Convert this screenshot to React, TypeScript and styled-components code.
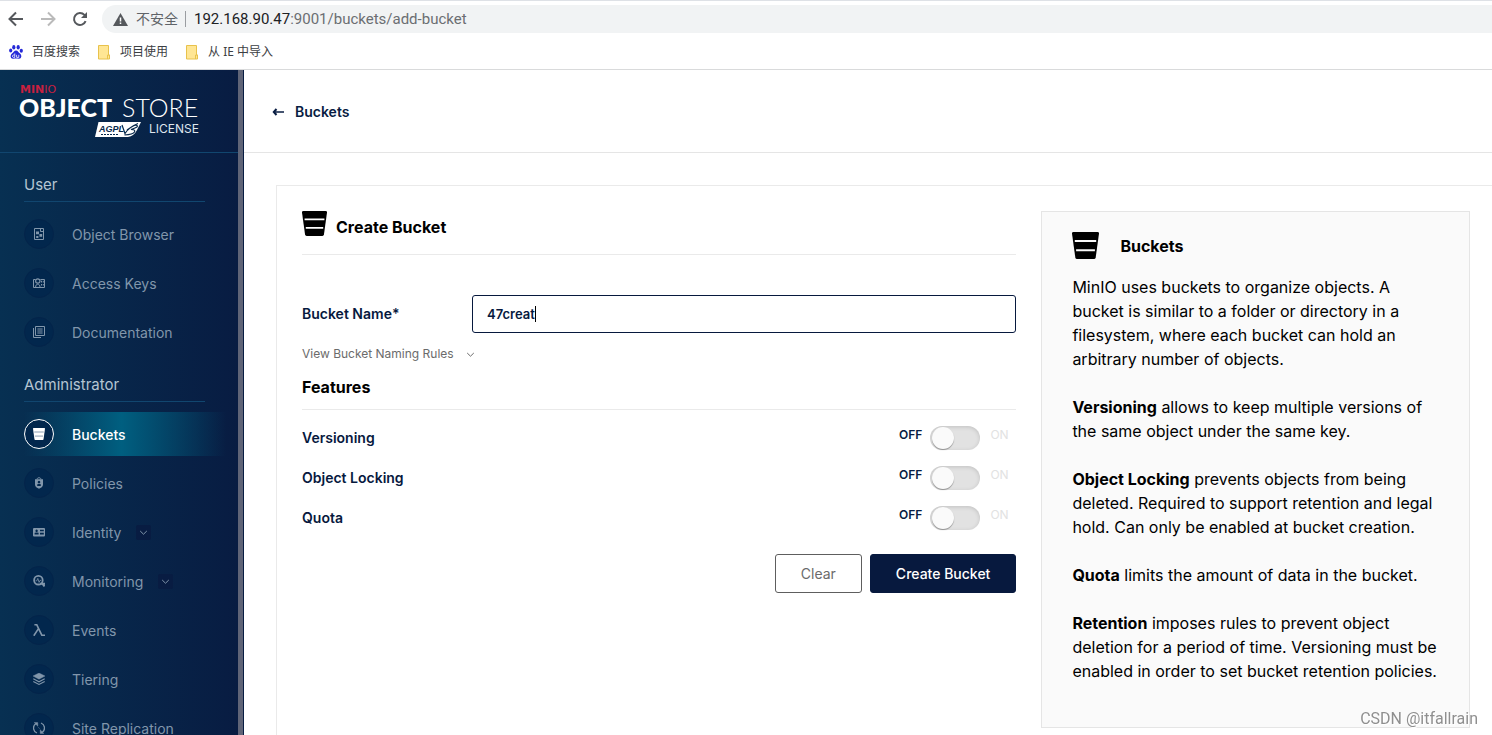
import React, { useState } from "react";
import styled, { createGlobalStyle } from "styled-components";

const navy = "#07193e";
const ui = `Inter, "Liberation Sans", sans-serif`;
const chromeFont = `"Noto Sans", "Noto Sans CJK SC", sans-serif`;

const GlobalStyle = createGlobalStyle`
  *, *::before, *::after { box-sizing: border-box; }
  body { margin: 0; background: #fff; font-family: ${ui}; color: #000; }
  button, input { font-family: inherit; }
`;

const Page = styled.div`
  display: flex;
  flex-direction: column;
  height: 100vh;
  overflow: hidden;
`;

/* ---------- browser bars ---------- */

const BrowserBar = styled.header`
  flex: none;
  border-top: 1px solid #dee1e6;
  border-bottom: 1px solid #d9dadb;
  font-family: ${chromeFont};
`;

const Toolbar = styled.div`
  display: flex;
  align-items: center;
  height: 36px;
  padding-left: 5px;
`;

const ToolButton = styled.button<{ $dim?: boolean }>`
  display: grid;
  place-items: center;
  width: 32px;
  height: 32px;
  padding: 0 10px 0 0;
  border: 0;
  background: none;
  color: ${(p) => (p.$dim ? "#bababa" : "#55585c")};
`;

const AddressBar = styled.div`
  display: flex;
  flex: 1;
  align-items: center;
  gap: 8px;
  height: 28px;
  margin-left: 1px;
  padding-left: 11px;
  border-radius: 14px 0 0 14px;
  background: #f1f3f4;
  color: #5f6368;
  font-size: 14px;
  line-height: 20px;
`;

const Insecure = styled.span`
  padding-right: 7px;
  border-right: 1px solid #9a9da1;
  line-height: 16px;
`;

const Address = styled.span`
  color: #6b6e72;
  font-size: 15px;
  font-family: Roboto, sans-serif;
  b { color: #202124; font-weight: 400; }
`;

const Bookmarks = styled.nav`
  display: flex;
  align-items: center;
  gap: 18px;
  height: 32px;
  padding: 0 0 2px 9px;
`;

const Bookmark = styled.a`
  display: flex;
  align-items: center;
  gap: 9px;
  color: #3c4043;
  font-size: 12px;
  line-height: 16px;
  text-decoration: none;
`;

/* ---------- side menu ---------- */

const Body = styled.div`
  display: flex;
  flex: 1;
  min-height: 0;
`;

const Sidebar = styled.aside`
  flex: none;
  width: 238px;
  overflow: hidden;
  background: linear-gradient(90deg, #073052 0%, #081c42 100%);
`;

const ScrollTrack = styled.div`
  flex: none;
  width: 6px;
  border-right: 1px solid #081c42;
  background: #5f6477;
`;

const Brand = styled.div`
  height: 83px;
  padding: 12px 0 0 18px;
  border-bottom: 1px solid #11466f;
  svg { display: block; }
`;

const Menu = styled.nav`
  padding-top: 1px;
`;

const MenuTitle = styled.h2`
  height: 48px;
  margin: 0 33px 0 24px;
  padding-top: 21px;
  border-bottom: 1px solid #11466f;
  color: #b4c5d3;
  font-size: 15px;
  font-weight: 400;
  line-height: 20px;
`;

const MenuList = styled.ul`
  display: grid;
  gap: 5px;
  margin: 0;
  padding: 10px 0 0;
  list-style: none;
`;

const MenuLink = styled.a<{ $active?: boolean }>`
  display: flex;
  align-items: center;
  height: 44px;
  padding-left: 24px;
  color: ${(p) => (p.$active ? "#fff" : "#8196ab")};
  background: ${(p) =>
    p.$active
      ? "linear-gradient(90deg, transparent 10%, #005f80 51%, transparent 95%)"
      : "none"};
  font-size: 14px;
  font-weight: ${(p) => (p.$active ? 500 : 400)};
  line-height: 20px;
  text-decoration: none;
`;

const MenuLabel = styled.span`
  padding-top: 2px;
`;

const MenuIcon = styled.span<{ $active?: boolean }>`
  display: grid;
  place-items: center;
  width: 30px;
  height: 30px;
  margin-right: 18px;
  border: 1px solid ${(p) => (p.$active ? "#fff" : "#04244a")};
  border-radius: 50%;
  background: #02274d;
`;

const Expand = styled.span`
  display: grid;
  place-items: center;
  width: 15px;
  height: 15px;
  margin-left: 15px;
  border-radius: 2px;
  background: #081c42;
`;

/* ---------- content ---------- */

const Main = styled.main`
  flex: 1;
  min-width: 0;
  overflow: hidden;
`;

const PageHeader = styled.div`
  display: flex;
  align-items: center;
  height: 83px;
  padding: 2px 0 0 28px;
  border-bottom: 1px solid #e5e5e5;
`;

const BackLink = styled.a`
  display: flex;
  align-items: center;
  gap: 10px;
  color: #081c42;
  font-size: 14px;
  font-weight: 600;
  line-height: 20px;
  text-decoration: none;
`;

const Panel = styled.section`
  display: grid;
  grid-template-columns: minmax(0, 5fr) minmax(0, 3fr);
  align-items: start;
  gap: 25px;
  min-height: 100%;
  margin: 32px 0 0 32px;
  padding: 25px 22px 25px 25px;
  border: solid #eaeaea;
  border-width: 1px 0 0 1px;
`;

const Form = styled.form`
  display: flex;
  flex-direction: column;
`;

const FormTitle = styled.h1`
  display: flex;
  gap: 9px;
  height: 44px;
  margin: 0 0 40px;
  border-bottom: 1px solid #eaeaea;
  font-size: 16px;
  font-weight: 700;
  line-height: 32px;
`;

const Field = styled.div`
  display: grid;
  grid-template-columns: 170px 1fr;
  align-items: center;
`;

const FieldLabel = styled.label`
  color: ${navy};
  font-size: 14px;
  font-weight: 600;
  line-height: 20px;
`;

const InputBox = styled.div`
  position: relative;
`;

const TextInput = styled.input`
  display: block;
  width: 100%;
  height: 38px;
  padding: 0 14px;
  border: 1px solid ${navy};
  border-radius: 3px;
  outline: 0;
  background: #fff;
  color: ${navy};
  font-size: 13px;
  font-weight: 600;
  caret-color: transparent;
`;

const Caret = styled.span`
  position: absolute;
  top: 11px;
  left: 63px;
  width: 1px;
  height: 16px;
  background: #000;
`;

const RulesToggle = styled.button`
  display: flex;
  align-items: center;
  gap: 12px;
  align-self: flex-start;
  margin-top: 11px;
  padding: 0;
  border: 0;
  background: none;
  color: #6b6b6b;
  font-size: 12px;
  line-height: 20px;
`;

const SectionTitle = styled.h3`
  height: 46px;
  margin: 0 0 8px;
  padding-top: 11px;
  border-bottom: 1px solid #eaeaea;
  font-size: 16px;
  font-weight: 700;
  line-height: 24px;
`;

const SwitchRow = styled.div`
  display: flex;
  align-items: center;
  justify-content: space-between;
  height: 40px;
`;

const SwitchGroup = styled.div`
  display: grid;
  grid-template-columns: auto 50px 28px;
  align-items: center;
  column-gap: 8px;
`;

const SwitchText = styled.span<{ $on?: boolean }>`
  padding: 0 0 6px ${(p) => (p.$on ? 0 : 2)}px;
  color: ${(p) => (p.$on ? "#081c42" : "#e2e2e2")};
  font-size: 12px;
  font-weight: ${(p) => (p.$on ? 600 : 400)};
  line-height: 16px;
`;

const Switch = styled.input`
  appearance: none;
  display: flex;
  align-items: center;
  width: 50px;
  height: 24px;
  margin: 0;
  padding: 0 2px;
  border-radius: 12px;
  background: #e2e2e2;
  box-shadow: inset 0 1px 4px rgba(0, 0, 0, 0.15);

  &::before {
    content: "";
    width: 22px;
    height: 22px;
    border-radius: 50%;
    background: #fafafa;
    box-shadow: 0 1px 1px rgba(0, 0, 0, 0.35);
  }
  &:checked { justify-content: flex-end; background: #4ccb92; }
`;

const Actions = styled.div`
  display: flex;
  justify-content: flex-end;
  gap: 8px;
  margin-top: 16px;
`;

const Button = styled.button<{ $primary?: boolean }>`
  height: 39px;
  padding: 0 25px;
  border: 1px solid ${(p) => (p.$primary ? navy : "#5e5e5e")};
  border-radius: 3px;
  background: ${(p) => (p.$primary ? navy : "#fff")};
  color: ${(p) => (p.$primary ? "#fff" : "#6b6b6b")};
  font-size: 14px;
  font-weight: ${(p) => (p.$primary ? 500 : 400)};
`;

const Help = styled.aside`
  padding: 20px 30px 44px 30px;
  border: 1px solid #e5e5e5;
  background: #fafafa;
  font-size: 16px;
  font-weight: 400;
  line-height: 24px;
  p { margin: 0 0 24px; }
  p:last-child { margin: 0; }
  b { font-weight: 700; }
`;

const HelpTitle = styled.h2`
  display: flex;
  align-items: center;
  gap: 21px;
  margin: 0 0 16px;
  font-size: 16px;
  font-weight: 700;
  line-height: 24px;
`;

const Watermark = styled.div`
  position: fixed;
  right: 14px;
  bottom: 6px;
  color: #8f8f8f;
  font: 16px/20px Roboto, sans-serif;
  text-shadow: 1px 1px 0 #fff;
`;

/* ---------- drawings ---------- */

const BucketIcon = ({ size, line = "#fff" }: { size: number; line?: string }) => (
  <svg width={size} height={size} viewBox="0 0 27 27" aria-hidden="true">
    <path d="M1.4 0h24.2Q27.1 0 27 1.5L23.7 25.4Q23.4 27 22 27H5Q3.6 27 3.3 25.4L0 1.5Q-.1 0 1.4 0Z" fill="currentColor" />
    <path d="M2.8 9h21.4M4.1 18.2h18.8" stroke={line} strokeWidth="2" />
  </svg>
);

const Chevron = ({ size = 9 }: { size?: number }) => (
  <svg width={size} height={size} viewBox="0 0 9 9" fill="none" stroke="currentColor" aria-hidden="true">
    <path d="M1.2 3l3.3 3.2L7.8 3" />
  </svg>
);

const glyphs: Record<string, React.ReactNode> = {
  browser: (
    <>
      <path d="M1.5.5h9v11h-9zM7.5.5v3h3" fill="none" stroke="currentColor" />
      <path d="M3 3.4h3v2.8H3zM6.4 6h2.8v2.8H6.4zM3.2 8h2.2v2H3.2z" fill="currentColor" />
    </>
  ),
  keys: (
    <>
      <path d="M2.6 2.5H.5v8h11v-8H7.4M2.6 10.4c0-2.200.8-3.200 2.200-3.200S7 8.200 7 10.400" fill="none" stroke="currentColor" />
      <circle cx="4.8" cy="4" r="2.2" fill="none" stroke="currentColor" strokeWidth="1.2" />
      <path d="M8 3.800h1v1.600H8zM9.800 3.800h1v1.600h-1zM8 7h1v1.600H8zM9.800 7h1v1.600h-1z" fill="currentColor" />
    </>
  ),
  docs: (
    <path d="M2.5.5h9v9h-9zM.5 2v9.5H8M4.4 3h5.2M4.4 5h5.2M4.4 7h5.2" fill="none" stroke="currentColor" />
  ),
  policies: (
    <>
      <path d="M4 2.4C4 .2 8 .2 8 2.4" fill="none" stroke="currentColor" />
      <path fillRule="evenodd" d="M2 2.2h8v5.6c0 2-2 3.2-4 4-2-.8-4-2-4-4zM6 3.8a1.3 1.3 0 1 0 .01 0zM4.2 9h3.6V7.6c0-.8-3.6-.8-3.6 0z" fill="currentColor" />
    </>
  ),
  identity: (
    <path fillRule="evenodd" d="M1 2h10a1 1 0 0 1 1 1v6.6a1 1 0 0 1-1 1H1a1 1 0 0 1-1-1V3a1 1 0 0 1 1-1zm2.6 1.6a1.2 1.2 0 1 0 .01 0zM1.6 8.4h4V7.2c0-.8-4-.8-4 0zM7 3.8v1.4h3.8V3.8zM7 6.8v1.6h3.8V6.8z" fill="currentColor" />
  ),
  monitoring: (
    <>
      <circle cx="5.4" cy="5.2" r="4.3" fill="none" stroke="currentColor" strokeWidth="1.8" />
      <path d="M2.6 5.8h1.2l1-2.4 1.3 4 .9-2h1.2" fill="none" stroke="currentColor" strokeWidth=".8" />
      <path d="M7 8.8h5M8.8 8.2l2.8 3.2" stroke="currentColor" strokeWidth="2" />
    </>
  ),
  events: (
    <path d="M1.4.8h2.4l5 10.4H12M5.6 4.4L.8 11.8" fill="none" stroke="currentColor" strokeWidth="1.6" />
  ),
  tiering: (
    <>
      <path d="M6 0l6 3-6 3.2L0 3z" fill="currentColor" stroke="currentColor" strokeWidth=".4" />
      <path d="M.3 5.8L6 8.8l5.7-3M.3 8.4L6 11.4l5.7-3" fill="none" stroke="currentColor" strokeWidth="1.1" />
    </>
  ),
  replication: (
    <>
      <path d="M4 11C-.4 9.4-.4 3.6 2.8 1.8M8 1c4.4 1.6 4.4 7.4 1.2 9.2" fill="none" stroke="currentColor" strokeWidth="1.3" />
      <path d="M1.2.6h3.6v3.6zM10.8 11.4H7.2V7.8zM4.8 5l2.4 2" fill="currentColor" stroke="currentColor" strokeWidth=".4" />
    </>
  ),
};

const Glyph = ({ name }: { name: string }) =>
  name === "bucket" ? (
    <BucketIcon size={12} line="#7d90a8" />
  ) : (
    <svg width="12" height="12" viewBox="0 0 12 12" aria-hidden="true">
      {glyphs[name]}
    </svg>
  );

const Logo = () => (
  <svg width="190" height="60" viewBox="18 82 190 60" role="img" aria-label="MinIO Object Store, AGPLv3 license">
    <g fill="#c8203f" fontFamily="DejaVu Sans" fontSize="11">
      <text x="20" y="93" fontWeight="700">
        MIN<tspan fontWeight="400">IO</tspan>
      </text>
    </g>
    <g fill="#fff" fontFamily="Lato, sans-serif" fontSize="25">
      <text x="19" y="117" fontWeight="900">OBJECT</text>
      <text x="122" y="117" fontWeight="300">STORE</text>
    </g>
    <path d="M98.5 122H141L137 130Q134 136 128 137H95z" fill="#fff" />
    <text x="99" y="132" fill="#07284a" fontFamily="Liberation Sans" fontSize="9" fontStyle="italic" fontWeight="700">AGPL</text>
    <path d="M101 134.5h17" stroke="#07284a" strokeDasharray="2 1" />
    <path d="M122 125l3 8.5q4-6.5 13-10M127 130q8-6 10-4.5t-6 4q5 0 3.5 2.5t-10 3" fill="none" stroke="#07284a" strokeWidth="1.2" />
    <text x="149" y="133" fill="#dfe6ee" fontFamily="Inter, sans-serif" fontSize="12">LICENSE</text>
  </svg>
);

const PawIcon = () => (
  <svg width="14" height="14" viewBox="0 0 14 14" fill="#2529d8" aria-hidden="true">
    <ellipse cx="4.8" cy="2.3" rx="1.6" ry="2.2" />
    <ellipse cx="9.2" cy="2.3" rx="1.6" ry="2.2" />
    <ellipse cx="1.7" cy="5.6" rx="1.6" ry="2" />
    <ellipse cx="12.3" cy="5.8" rx="1.6" ry="2" />
    <path d="M7 5.4c2 0 2.6 2 4 3.2 2.2 2 1.6 5.2-1 5.2-1.2 0-2-.2-3-.2s-1.8.2-3 .2c-2.6 0-3.2-3.2-1-5.2C4.4 7.4 5 5.4 7 5.4z" />
    <path d="M5.8 8.4v4H4.6c-1.6 0-1.6-2.4 0-2.4h1.2M7.6 9.8v2.6h2.2V9.8" fill="none" stroke="#fff" strokeWidth=".8" />
  </svg>
);

const FolderIcon = () => (
  <svg width="13" height="15" viewBox="0 0 13 15" aria-hidden="true">
    <path d="M.5 .5h10v9.5h1v4H.5z" fill="#ffe694" stroke="#e8c24c" />
    <path d="M9.5 14v-4h2" fill="none" stroke="#e8c24c" />
  </svg>
);

/* ---------- page ---------- */

type Item = { icon: string; label: string; active?: boolean; more?: boolean };

const userItems: Item[] = [
  { icon: "browser", label: "Object Browser" },
  { icon: "keys", label: "Access Keys" },
  { icon: "docs", label: "Documentation" },
];

const adminItems: Item[] = [
  { icon: "bucket", label: "Buckets", active: true },
  { icon: "policies", label: "Policies" },
  { icon: "identity", label: "Identity", more: true },
  { icon: "monitoring", label: "Monitoring", more: true },
  { icon: "events", label: "Events" },
  { icon: "tiering", label: "Tiering" },
  { icon: "replication", label: "Site Replication" },
];

const MenuSection = ({ title, items }: { title: string; items: Item[] }) => (
  <>
    <MenuTitle>{title}</MenuTitle>
    <MenuList>
      {items.map((item) => (
        <li key={item.label}>
          <MenuLink href="#" $active={item.active}>
            <MenuIcon $active={item.active}>
              <Glyph name={item.icon} />
            </MenuIcon>
            <MenuLabel>{item.label}</MenuLabel>
            {item.more && (
              <Expand>
                <Chevron />
              </Expand>
            )}
          </MenuLink>
        </li>
      ))}
    </MenuList>
  </>
);

const features = ["Versioning", "Object Locking", "Quota"];

export default function App() {
  const [name, setName] = useState("47creat");

  return (
    <Page>
      <GlobalStyle />
      <BrowserBar>
        <Toolbar>
          <ToolButton aria-label="Back">
            <svg width="16" height="16" viewBox="0 0 16 16" fill="none" stroke="currentColor" strokeWidth="2">
              <path d="M15 8H2M8 1.5L1.5 8 8 14.5" />
            </svg>
          </ToolButton>
          <ToolButton aria-label="Forward" $dim>
            <svg width="16" height="16" viewBox="0 0 16 16" fill="none" stroke="currentColor" strokeWidth="2">
              <path d="M1 8h13M8 1.5L14.5 8 8 14.5" />
            </svg>
          </ToolButton>
          <ToolButton aria-label="Reload">
            <svg width="16" height="16" viewBox="0 0 16 16" fill="none" stroke="currentColor" strokeWidth="2">
              <path d="M13.6 10.2A6 6 0 1 1 12.4 3.9L14 5.5" />
              <path d="M15 1v6H9z" fill="currentColor" stroke="none" />
            </svg>
          </ToolButton>
          <AddressBar>
            <svg width="15" height="13" viewBox="0 0 15 13" aria-hidden="true">
              <path d="M7.5 0L15 13H0z" fill="#55585c" />
              <path d="M7.5 4.5v4M7.5 9.5v1.5" stroke="#fff" strokeWidth="1.5" />
            </svg>
            <Insecure>不安全</Insecure>
            <Address>
              <b>192.168.90.47</b>:9001/buckets/add-bucket
            </Address>
          </AddressBar>
        </Toolbar>
        <Bookmarks>
          <Bookmark href="#"><PawIcon />百度搜索</Bookmark>
          <Bookmark href="#"><FolderIcon />项目使用</Bookmark>
          <Bookmark href="#"><FolderIcon />从 IE 中导入</Bookmark>
        </Bookmarks>
      </BrowserBar>

      <Body>
        <Sidebar>
          <Brand><Logo /></Brand>
          <Menu>
            <MenuSection title="User" items={userItems} />
            <MenuSection title="Administrator" items={adminItems} />
          </Menu>
        </Sidebar>
        <ScrollTrack />

        <Main>
          <PageHeader>
            <BackLink href="#">
              <svg width="13" height="10" viewBox="0 0 13 10" aria-hidden="true">
                <path d="M2 5h10" stroke="currentColor" strokeWidth="1.5" />
                <path d="M4.5 2L1.8 5l2.7 3" fill="none" stroke="currentColor" strokeWidth="2" />
              </svg>
              Buckets
            </BackLink>
          </PageHeader>

          <Panel>
            <Form onSubmit={(e) => e.preventDefault()}>
              <FormTitle>
                <BucketIcon size={25} />
                Create Bucket
              </FormTitle>
              <Field>
                <FieldLabel htmlFor="bucket-name">Bucket Name*</FieldLabel>
                <InputBox>
                  <TextInput
                    id="bucket-name"
                    autoFocus
                    autoComplete="off"
                    value={name}
                    onChange={(e) => setName(e.target.value)}
                  />
                  <Caret />
                </InputBox>
              </Field>
              <RulesToggle type="button">
                View Bucket Naming Rules
                <Chevron />
              </RulesToggle>
              <SectionTitle>Features</SectionTitle>
              {features.map((feature) => (
                <SwitchRow key={feature}>
                  <FieldLabel htmlFor={feature}>{feature}</FieldLabel>
                  <SwitchGroup>
                    <SwitchText $on>OFF</SwitchText>
                    <Switch type="checkbox" id={feature} />
                    <SwitchText>ON</SwitchText>
                  </SwitchGroup>
                </SwitchRow>
              ))}
              <Actions>
                <Button type="button" onClick={() => setName("")}>Clear</Button>
                <Button type="submit" $primary>Create Bucket</Button>
              </Actions>
            </Form>

            <Help>
              <HelpTitle>
                <BucketIcon size={27} line="#fafafa" />
                Buckets
              </HelpTitle>
              <p>
                MinIO uses buckets to organize objects. A bucket is similar to a folder or directory in a
                filesystem, where each bucket can hold an arbitrary number of objects.
              </p>
              <p><b>Versioning</b> allows to keep multiple versions of the same object under the same key.</p>
              <p>
                <b>Object Locking</b> prevents objects from being deleted. Required to support retention and
                legal hold. Can only be enabled at bucket creation.
              </p>
              <p><b>Quota</b> limits the amount of data in the bucket.</p>
              <p>
                <b>Retention</b> imposes rules to prevent object deletion for a period of time. Versioning must
                be enabled in order to set bucket retention policies.
              </p>
            </Help>
          </Panel>
        </Main>
      </Body>
      <Watermark>CSDN @itfallrain</Watermark>
    </Page>
  );
}
